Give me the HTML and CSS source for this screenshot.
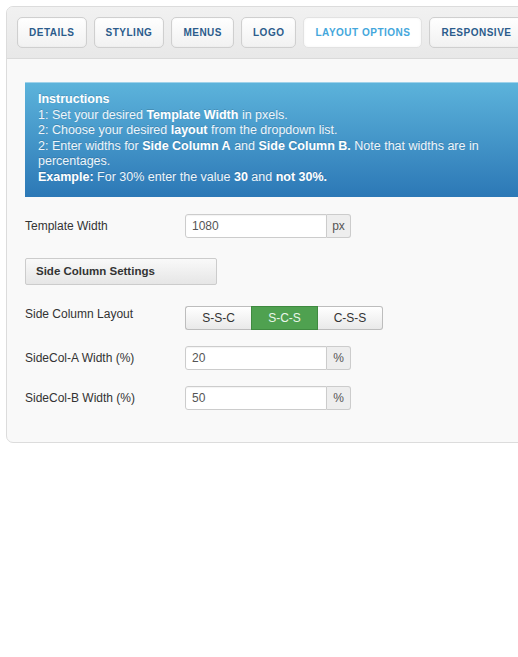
FILE: index.html
```html
<!DOCTYPE html>
<html>
<head>
<meta charset="utf-8">
<link rel="stylesheet" href="styles.css">
</head>
<body>
<div class="panel">
  <div class="tabs">
    <div class="tab">DETAILS</div>
    <div class="tab">STYLING</div>
    <div class="tab">MENUS</div>
    <div class="tab">LOGO</div>
    <div class="tab active">LAYOUT OPTIONS</div>
    <div class="tab">RESPONSIVE</div>
  </div>
  <div class="content">
    <div class="info">
      <div class="info-title">Instructions</div>
      <div>1: Set your desired <b>Template Width</b> in pxels.</div>
      <div>2: Choose your desired <b>layout</b> from the dropdown list.</div>
      <div>2: Enter widths for <b>Side Column A</b> and <b>Side Column B.</b> Note that widths are in percentages.</div>
      <div><b>Example:</b> For 30% enter the value <b>30</b> and <b>not 30%.</b></div>
    </div>

    <div class="row r-tw">
      <label class="lbl">Template Width</label>
      <div class="group"><span class="inp">1080</span><span class="addon">px</span></div>
    </div>

    <div class="section-btn">Side Column Settings</div>

    <div class="row r-layout">
      <label class="lbl">Side Column Layout</label>
      <div class="seg">
        <span class="seg-btn">S-S-C</span>
        <span class="seg-btn on">S-C-S</span>
        <span class="seg-btn">C-S-S</span>
      </div>
    </div>

    <div class="row r-a">
      <label class="lbl">SideCol-A Width (%)</label>
      <div class="group"><span class="inp">20</span><span class="addon">%</span></div>
    </div>

    <div class="row r-b">
      <label class="lbl">SideCol-B Width (%)</label>
      <div class="group"><span class="inp">50</span><span class="addon">%</span></div>
    </div>
  </div>
</div>
</body>
</html>
```

FILE: styles.css
```css
html, body {
  margin: 0;
  padding: 0;
  background: #fff;
  overflow: hidden;
}
body {
  font-family: "Liberation Sans", Arial, sans-serif;
  font-size: 12px;
  color: #333;
  width: 518px;
  height: 657px;
}
.panel {
  margin: 6px 0 0 6px;
  width: 600px;
  border: 1px solid #dcdcdc;
  border-radius: 7px;
  background: #f9f9f9;
  overflow: hidden;
}
.tabs {
  display: flex;
  gap: 7px;
  padding: 10px 10px 10px 10px;
  background: linear-gradient(#f1f1f1, #e8e8e8);
  border-bottom: 1px solid #dadada;
  white-space: nowrap;
}
.tab {
  flex: none;
  height: 29px;
  line-height: 29px;
  padding: 0 11px;
  border: 1px solid #cfcfcf;
  border-radius: 5px;
  background: linear-gradient(#ffffff, #f1f1f1);
  box-shadow: inset 0 0 2px rgba(0,0,0,0.06);
  font-family: "Liberation Sans", Arial, sans-serif;
  font-weight: bold;
  font-size: 10px;
  letter-spacing: 0.5px;
  color: #2b5c8c;
}
.tab.active {
  background: #fff;
  color: #44a7dc;
  border-color: #e2e2e2;
  box-shadow: inset 0 0 3px rgba(0,0,0,0.05);
}
.content {
  padding: 23px 18px 32px 18px;
}
.info {
  width: 520px;
  box-sizing: border-box;
  height: 115px;
  padding: 9px 13px 0 13px;
  background: linear-gradient(#5cb3db, #2c78b6);
  border-top: 1px solid #9fd2ea;
  color: #eef5fa;
  font-size: 12.5px;
  line-height: 15.5px;
  text-shadow: 0 -1px 0 rgba(0,0,0,0.15);
}
.info > div { width: 462px; }
.info b, .info-title {
  font-family: "Liberation Sans", Arial, sans-serif;
  font-weight: bold;
  font-size: 12.5px;
  color: #fff;
}
.row {
  display: flex;
  align-items: center;
}
.lbl {
  width: 160px;
  flex: none;
  font-size: 12px;
  color: #333;
}
.r-tw { margin-top: 17px; }
.r-layout { margin-top: 21px; align-items: flex-start; }
.r-layout .lbl { margin-top: 1px; }
.r-a { margin-top: 16px; }
.r-b { margin-top: 16px; }
.group {
  display: flex;
  height: 24px;
}
.inp {
  width: 142px;
  box-sizing: border-box;
  height: 24px;
  line-height: 22px;
  padding-left: 6px;
  border: 1px solid #cccccc;
  border-radius: 3px 0 0 3px;
  background: #fff;
  color: #555;
  font-size: 12px;
  box-shadow: inset 0 1px 1px rgba(0,0,0,0.05);
}
.addon {
  width: 24px;
  box-sizing: border-box;
  height: 24px;
  line-height: 22px;
  text-align: center;
  border: 1px solid #cccccc;
  border-left: none;
  border-radius: 0 3px 3px 0;
  background: #eeeeee;
  color: #555;
  font-size: 12px;
}
.section-btn {
  margin-top: 20px;
  width: 192px;
  height: 27px;
  box-sizing: border-box;
  line-height: 25px;
  padding-left: 10px;
  border: 1px solid #cccccc;
  border-radius: 2px;
  background: linear-gradient(#f9f9f9, #e6e6e6);
  font-family: "Liberation Sans", Arial, sans-serif;
  font-weight: bold;
  font-size: 11.5px;
  color: #333;
}
.seg {
  display: flex;
  height: 24px;
}
.seg-btn {
  width: 66px;
  box-sizing: border-box;
  height: 24px;
  line-height: 22px;
  text-align: center;
  border: 1px solid #bdbdbd;
  background: linear-gradient(#ffffff, #e9e9e9);
  color: #333;
  font-size: 12px;
}
.seg-btn:first-child { border-radius: 3px 0 0 3px; border-right: none; }
.seg-btn:last-child { border-radius: 0 3px 3px 0; border-left: none; width: 65px; }
.seg-btn.on {
  width: 67px;
  background: #4fa150;
  border-color: #3f8a40;
  color: #eaf6ea;
}
```
